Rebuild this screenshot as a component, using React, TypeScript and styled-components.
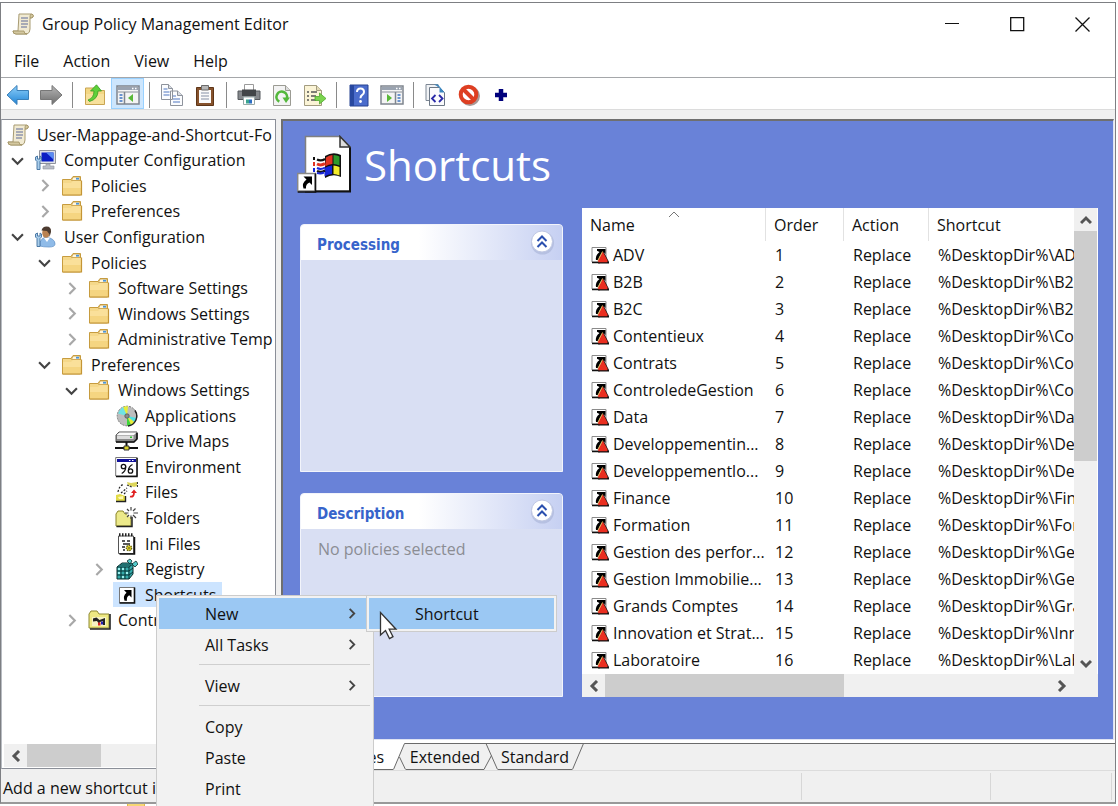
import React from "react";
import styled, { createGlobalStyle, css } from "styled-components";

const GlobalStyle = createGlobalStyle`
  * { box-sizing: border-box; }
  html, body { margin: 0; height: 100%; overflow: hidden; background: #fff; }
  #root { height: 100%; }
  body, button { font-family: "Open Sans", "Noto Sans", sans-serif; font-size: 16px; line-height: 20px; color: #111; }
  button { border: 0; padding: 0; margin: 0; background: none; text-align: left; white-space: nowrap; }
  svg { display: block; flex: none; }
`;

/* ---------- frame ---------- */

const Desktop = styled.div`
  position: relative;
  display: flex;
  flex-direction: column;
  height: 100%;
  padding: 2px 2px 0 0;
  overflow: hidden;
`;

const AppWindow = styled.div`
  display: flex;
  flex-direction: column;
  flex: 1;
  min-height: 0;
  background: #f0f0f0;
  border: 1px solid #7d7f83;
  border-bottom: 2px solid #999;
`;

const TitleBar = styled.header`
  display: flex;
  align-items: center;
  flex: none;
  height: 42px;
  padding-left: 11px;
  background: #fff;
`;

const Title = styled.h1`
  flex: 1;
  margin: 0 0 0 7px;
  font-size: 16px;
  font-weight: 400;
`;

const CaptionButton = styled.button`
  display: flex;
  align-items: center;
  justify-content: center;
  width: 65px;
  height: 42px;
`;

const MenuBar = styled.nav`
  display: flex;
  flex: none;
  height: 33px;
  padding-left: 2px;
  background: #fff;
  border-bottom: 1px solid #a5a7aa;
`;

const MenuBarItem = styled.button`
  padding: 0 13px 0 11px;
`;

const ToolBar = styled.div`
  display: flex;
  flex: none;
  height: 32px;
  background: #fff;
  border-bottom: 1px solid #dcdcdc;
`;

const ToolButton = styled.button<{ $on?: boolean }>`
  display: flex;
  align-items: center;
  justify-content: center;
  width: 33px;
  height: 31px;
  padding-top: 3px;
  ${(p) => p.$on && css`background: #cde6fd; border: 1px solid #99d1ff;`}
`;

const ToolDivider = styled.span`
  width: 1px;
  height: 26px;
  margin: 4px 5px 0;
  background: #8a8a8a;
`;

const Workspace = styled.main`
  display: flex;
  flex: 1;
  min-height: 0;
  padding: 9px 1px 0 0;
`;

/* ---------- tree ---------- */

const TreePane = styled.section`
  display: flex;
  flex-direction: column;
  flex: none;
  width: 275px;
  margin-bottom: 2px;
  padding-right: 2px;
  background: #fff;
  border: 1px solid #8b8f98;
  border-left-color: #b8bcc2;
  overflow: hidden;
`;

const TreeList = styled.ul`
  display: grid;
  grid-template-columns: 100%;
  grid-auto-rows: 1fr;
  height: 511px;
  margin: 2px 0 0;
  padding: 0;
  list-style: none;
  overflow: hidden;
`;

const TreeItem = styled.li<{ $level: number }>`
  display: flex;
  min-width: 0;
  padding-left: ${(p) => 3 + Math.max(0, p.$level - 1) * 27}px;
`;

const TreeToggle = styled.button`
  display: flex;
  align-items: center;
  justify-content: center;
  flex: none;
  width: 27px;
  padding-right: 2px;
`;

const TreeSpacer = styled.span`
  flex: none;
  width: 27px;
`;

const TreeLabel = styled.button<{ $selected?: boolean }>`
  display: flex;
  align-items: center;
  gap: 7px;
  padding: 0 6px 0 2px;
  background: ${(p) => (p.$selected ? "#cce4ff" : "transparent")};
`;

/* ---------- scroll bars ---------- */

const ScrollBar = styled.div<{ $vertical?: boolean }>`
  display: flex;
  flex: none;
  flex-direction: ${(p) => (p.$vertical ? "column" : "row")};
  ${(p) => (p.$vertical ? "width: 23px;" : "height: 23px;")}
  background: #f0f0f0;
`;

const TreeScroll = styled(ScrollBar)`
  margin: auto 0 1px 2px;
`;

const ListScroll = styled(ScrollBar)`
  padding-right: 26px;
`;

const ScrollArrow = styled.button`
  display: flex;
  align-items: center;
  justify-content: center;
  flex: none;
  width: 23px;
  height: 23px;
`;

const ScrollTrack = styled.div<{ $vertical?: boolean }>`
  display: flex;
  flex: 1;
  flex-direction: ${(p) => (p.$vertical ? "column" : "row")};
`;

const ScrollThumb = styled.div<{ $length: number }>`
  flex: 0 0 ${(p) => p.$length}px;
  background: #cdcdcd;
`;

/* ---------- details ---------- */

const DetailsPane = styled.section`
  display: flex;
  flex-direction: column;
  flex: 1;
  min-width: 0;
  margin-left: 5px;
`;

const Sheet = styled.div`
  display: flex;
  flex-direction: column;
  flex: 1;
  min-height: 0;
  padding: 0 15px 42px 17px;
  background: #6982d8;
  border: 2px solid #6f6f6f;
  border-right: 1px solid #dfe3f2;
  border-bottom: 1px solid #dfe3f2;
`;

const SheetHeader = styled.div`
  display: flex;
  align-items: center;
  flex: none;
  height: 87px;
  margin-left: -3px;
  padding-bottom: 2px;
`;

const SheetTitle = styled.h2`
  margin: 2px 0 0 13px;
  font-size: 42px;
  font-weight: 400;
  line-height: 54px;
  color: #fff;
`;

const SheetBody = styled.div`
  display: flex;
  flex: 1;
  gap: 19px;
  min-height: 0;
`;

const Cards = styled.div`
  display: flex;
  flex-direction: column;
  flex: none;
  gap: 21px;
  width: 263px;
  padding-top: 16px;
`;

const Card = styled.section<{ $grow: number }>`
  display: flex;
  flex-direction: column;
  flex: ${(p) => p.$grow} 0 0;
  background: #d9dff3;
  border: 1px solid #f2f4fb;
  border-radius: 4px 4px 0 0;
  overflow: hidden;
`;

const CardHeader = styled.div`
  display: flex;
  align-items: center;
  justify-content: space-between;
  height: 35px;
  padding: 0 7px 2px 16px;
  background: linear-gradient(90deg, #fff 45%, #c6d0f2);
`;

const CardTitle = styled.h3`
  margin: 6px 0 0;
  font: bold 15px/20px "DejaVu Sans Condensed", "DejaVu Sans", sans-serif;
  color: #3764cb;
`;

const CardNote = styled.p`
  margin: 0;
  padding: 10px 0 0 17px;
  color: #8b8d93;
`;

const ListPane = styled.div`
  display: flex;
  flex-direction: column;
  flex: 1;
  min-width: 0;
  background: #fff;
`;

const ListArea = styled.div`
  display: flex;
  flex: 1;
  min-height: 0;
  padding-right: 1px;
`;

const TableClip = styled.div`
  flex: 1;
  min-width: 0;
  overflow: hidden;
`;

const PolicyTable = styled.table`
  width: 100%;
  border-collapse: separate;
  border-spacing: 0;
  table-layout: fixed;
`;

const HeadCell = styled.th<{ $width?: number }>`
  position: relative;
  width: ${(p) => (p.$width ? p.$width + "px" : "auto")};
  height: 33px;
  padding: 0 0 0 8px;
  font-weight: 400;
  text-align: left;
  border-right: 1px solid #e2e2e2;
  &:last-child { border-right: 0; }
`;

const SortMark = styled.span`
  position: absolute;
  top: 0;
  left: 50%;
  margin-left: -6px;
`;

const Cell = styled.td`
  height: 27px;
  padding: 0 0 0 9px;
  white-space: nowrap;
  overflow: hidden;
`;

const NameCell = styled.div`
  display: flex;
  align-items: center;
  gap: 3px;
  height: 27px;
`;

/* ---------- tabs and status ---------- */

const TabStrip = styled.div`
  display: flex;
  flex: none;
  height: 31px;
  margin-right: -1px;
  padding-top: 3px;
  background: linear-gradient(#fff 3px, #f0f0f0 3px);
  border-bottom: 1px solid #dcdcdc;
`;

const Tab = styled.button<{ $active?: boolean; $width: number }>`
  width: ${(p) => p.$width}px;
  height: 27px;
  text-align: ${(p) => (p.$active ? "right" : "center")};
  padding-right: ${(p) => (p.$active ? 9 : 0)}px;
  background: ${(p) => (p.$active ? "#fff" : "#f0f0f0")};
  border-top: 1px solid ${(p) => (p.$active ? "#fff" : "#6a6a6a")};
  border-bottom: 1px solid #6a6a6a;
`;

const TabFiller = styled.div`
  flex: 1;
  border-top: 1px solid #6a6a6a;
`;

const StatusBar = styled.footer`
  display: flex;
  align-items: center;
  flex: none;
  height: 31px;
  padding: 2px 3px 2px 2px;
`;

const StatusCell = styled.div<{ $width?: number }>`
  flex: ${(p) => (p.$width ? `0 0 ${p.$width}px` : "1")};
  height: 27px;
  padding-top: 5px;
  border-right: 1px solid #d7d7d7;
`;

/* ---------- menus ---------- */

const Popup = styled.div`
  position: absolute;
  background: #f2f2f2;
  border: 1px solid #ccc;
  padding: 2px;
`;

const ContextMenu = styled(Popup)`
  top: 595px;
  left: 156px;
  width: 218px;
  height: 240px;
`;

const SubMenu = styled(Popup)`
  top: 595px;
  left: 366px;
  width: 191px;
`;

const MenuItem = styled.button<{ $hot?: boolean }>`
  display: flex;
  align-items: center;
  justify-content: space-between;
  width: 100%;
  height: 31px;
  padding: 0 14px 0 46px;
  background: ${(p) => (p.$hot ? "#9bc8f3" : "transparent")};
`;

const MenuRule = styled.hr`
  height: 1px;
  margin: 4px 1px 5px 40px;
  border: 0;
  background: #cfcfcf;
`;

const Pointer = styled.span`
  position: absolute;
  top: 611px;
  left: 379px;
`;

/* ---------- page behind the window ---------- */

const Behind = styled.div`
  display: flex;
  flex: none;
  height: 2px;
  padding-left: 127px;
  overflow: hidden;
`;

const BehindFolder = styled.span`
  width: 18px;
  height: 2px;
  background: #f7d774;
  border: 1px solid #e0b84c;
  border-top: 0;
  border-bottom: 0;
`;

/* ---------- icons ---------- */

const Chevron = ({ dir, color = "#555", size = 12, stroke = 2 }: { dir: "up" | "down" | "left" | "right"; color?: string; size?: number; stroke?: number }) => {
  const d = { up: "M1 9l5-5 5 5", down: "M1 4l5 5 5-5", left: "M9 1L4 6l5 5", right: "M4 1l5 5-5 5" }[dir];
  return (
    <svg width={size} height={size} viewBox="0 0 12 12" fill="none" stroke={color} strokeWidth={stroke}>
      <path d={d} />
    </svg>
  );
};

const ScrollIcon = () => (
  <svg width="23" height="22" viewBox="0 0 23 22">
    <path d="M7 1h12q3 0 2 3-1 1-3 1v11q0 4-3 5H4q-3 0-3-3h5z" fill="#f1ead2" stroke="#a89b73" />
    <path d="M18 5V3q0-2 2-2 2 1 1 3-1 1-3 1zM1 18h11q0 3 3 3H4q-3 0-3-3z" fill="#d3c79f" stroke="#a08f60" strokeWidth=".8" />
    <path d="M9 5h7M9 8h7M9 11h7M9 14h6" stroke="#8f95ad" strokeWidth="1.3" />
  </svg>
);

const FolderIcon = () => (
  <svg width="23" height="22" viewBox="0 0 23 22">
    <path d="M1.5 4.5h8.500l2-3h7.500V20H1.500z" fill="#f5d88a" stroke="#c79c3f" />
    <path d="M12 2h7v3.500h-8.500z" fill="#fff6dc" stroke="#c79c3f" strokeWidth=".8" />
    <path d="M15 3.700h3" stroke="#4a94d8" strokeWidth="1.8" />
    <path d="M2 8h8l2-2h8v13.500H2z" fill="#fae09a" />
    <path d="M2 13h18v6.500H2z" fill="#f5d581" />
    <path d="M1.500 20h19V5.500" fill="none" stroke="#c49536" strokeWidth="1.2" />
  </svg>
);

const Wrench = () => (
  <path d="M1.500 8v3l1.500 1.500v8h3v-8L7.500 11V8L6 7v3H3.500V7z" fill="#a9cdea" stroke="#3f6f9f" strokeWidth=".9" />
);

const ComputerIcon = () => (
  <svg width="23" height="22" viewBox="0 0 23 22">
    <path d="M5.500 1.500h16v13h-16z" fill="#dfe2e8" stroke="#8e929c" />
    <path d="M7.500 3.500h12v9h-12z" fill="#0b1fc4" />
    <path d="M12 3.500h7.500v7z" fill="#5a8cf2" />
    <path d="M12 15h4v2h4v3H9v-3h3z" fill="#b9bdc6" stroke="#8c909a" strokeWidth=".6" />
    <Wrench />
  </svg>
);

const UserIcon = () => (
  <svg width="23" height="22" viewBox="0 0 23 22">
    <path d="M6 20q-1-7 6-9 9 1.500 9 7 0 3-6 3-6 0-9-1z" fill="#8fbbe8" stroke="#6a98cc" strokeWidth=".8" />
    <path d="M10 12l3 4 3-4.500z" fill="#fff" />
    <ellipse cx="12" cy="7" rx="3.800" ry="4.800" fill="#b98252" />
    <path d="M7.500 4.500q1-4 5-4 5 0 4.500 5.500L15.500 11q0-4-2.500-6z" fill="#4c3b30" />
    <Wrench />
  </svg>
);

const DiscIcon = () => (
  <svg width="23" height="22" viewBox="0 0 23 22">
    <circle cx="12" cy="11" r="9.800" fill="#bdbdbd" stroke="#777" strokeDasharray="2 1" />
    <path d="M12 11L8 2q2-1 5-.8z" fill="#e6ee39" />
    <path d="M12 11L3 8.500Q5 4 8 2z" fill="#6fe3e3" />
    <path d="M12 11l7.500 6q-1 2-3.500 3z" fill="#e6ee39" />
    <path d="M12 11l4 9q-2 1-4 .8z" fill="#3fd53a" />
    <path d="M12 11l9.500 2q-.5 2-2 4z" fill="#4fe0e0" />
    <circle cx="12" cy="11" r="2.200" fill="#8a8a8a" stroke="#555" strokeWidth=".8" />
    <path d="M20 5.500a10 10 0 01-7 15.500" fill="none" stroke="#222" strokeWidth="1.4" />
  </svg>
);

const DriveIcon = () => (
  <svg width="23" height="22" viewBox="0 0 23 22">
    <path d="M1 5l3-3h18v7l-3 3H1z" fill="#8a8a8a" stroke="#555" />
    <path d="M1.500 5l3-2.500h17L19 5z" fill="#fafafa" />
    <path d="M2 5.500h16.500V9H2z" fill="#dcdcdc" />
    <path d="M1 12h18l3-3V3" fill="none" stroke="#111" strokeWidth="1.6" />
    <path d="M15 7.200h2" stroke="#2cc12c" strokeWidth="1.500" />
    <path d="M11.500 12v5M0 18h23" stroke="#111" strokeWidth="2" />
    <path d="M9 16h5v4H9z" fill="#d8d02a" stroke="#333" />
  </svg>
);

const EnvironmentIcon = () => (
  <svg width="23" height="22" viewBox="0 0 23 22">
    <path d="M.7 1.500h21.500v18.500H.7z" fill="#fff" stroke="#777" />
    <path d="M22 2v18.500H1" fill="none" stroke="#111" strokeWidth="1.500" />
    <path d="M2 3h19v3H2z" fill="#10109a" />
    <path d="M14 4.500h1.500M17 4.500h1.500" stroke="#fff" />
    <circle cx="8.500" cy="10.500" r="2.200" fill="none" stroke="#111" strokeWidth="1.300" />
    <path d="M10.700 10.500q0 5-4 7M17.500 8.500q-4 2-4 6" fill="none" stroke="#111" strokeWidth="1.300" />
    <circle cx="15.500" cy="15" r="2.200" fill="none" stroke="#111" strokeWidth="1.300" />
  </svg>
);

const FilesIcon = () => (
  <svg width="23" height="22" viewBox="0 0 23 22">
    <path d="M12 1l4 1 6-1v4l-3 1-6-2z" fill="#ddd65a" />
    <path d="M12 4l5 2M22.500 1v5.500" stroke="#333" strokeWidth="1.2" strokeDasharray="2 1" />
    <path d="M3 11q1-6 6-8M6 12l6-5M9 13l3-3" fill="none" stroke="#222" strokeWidth="1.200" strokeDasharray="2 1.500" />
    <path d="M1 14l4-1 5 2v5H1z" fill="#e3dc48" />
    <path d="M3 16l5-1v3H4z" fill="#fff8b0" />
    <path d="M1 20.500h9.500V15" fill="none" stroke="#222" strokeWidth="1.4" />
    <path d="M15 15.500q4 1 4-4" fill="none" stroke="#e02020" strokeWidth="1.800" />
    <path d="M16 12h6l-3-3.500z" fill="#e02020" />
  </svg>
);

const NewFolderIcon = () => (
  <svg width="23" height="22" viewBox="0 0 23 22">
    <path d="M1 7l2-3h5l2 3h6v12H1z" fill="#ece98a" stroke="#8a8528" />
    <path d="M17 8v11.500H1.500" fill="none" stroke="#222" strokeWidth="1.500" />
    <circle cx="16" cy="6" r="4" fill="#fff" />
    <path d="M16 0v3.500M16 8.500v3.500M10 6h3.500M18.500 6H23M12 2l2 2M20.500 1.500L18 4M12 10l2-2M18 8l3 3" stroke="#444" strokeWidth="1.200" />
  </svg>
);

const IniIcon = () => (
  <svg width="23" height="22" viewBox="0 0 23 22">
    <path d="M3.500 3h15v17.500h-15z" fill="#fff" stroke="#555" />
    <path d="M19.500 4v17H4.500" fill="none" stroke="#111" strokeWidth="1.500" />
    <path d="M4 1.800h15" stroke="#222" strokeWidth="3" strokeDasharray="1.500 1.500" />
    <path d="M7 8h3M12 8h3M8 11h7M7 14h3M8 17h2" stroke="#222" strokeWidth="1.500" />
    <circle cx="14" cy="15" r="2.600" fill="#e4d626" stroke="#6b6410" strokeDasharray="1.500 .8" strokeWidth="1.400" />
    <circle cx="14" cy="15" r=".8" fill="#333" />
  </svg>
);

const RegistryIcon = () => (
  <svg width="23" height="22" viewBox="0 0 23 22">
    <path d="M2 9l5-4h9l2 1v10l-4 5H2z" fill="#35abab" stroke="#0a2c2c" />
    <path d="M2 9h12v12M14 9l4-3M6 9v12M10 9v12M2 13h12l4-3M2 17h12l4-3M5 7h11" fill="none" stroke="#06292b" strokeWidth=".9" />
    <path d="M3 10h2v2H3zM7 10h2v2H7zM11 14h2v2h-2zM3 14h2v2H3zM7 18h2v2H7z" fill="#9df0ee" />
    <path d="M12 3l3-2 2 2-2 3zM17 6l4-3 2 3-3 3z" fill="#52c9c9" stroke="#0a2c2c" strokeWidth=".8" />
  </svg>
);

const ShortcutIcon = () => (
  <svg width="23" height="22" viewBox="0 0 23 22">
    <path d="M4.500 3.500h15v15h-15z" fill="#fff" stroke="#777" />
    <path d="M19.500 3.500V19H4.500" fill="none" stroke="#111" strokeWidth="1.600" />
    <path d="M9 6h7.500v7.500L14.200 11.200q-3 1.500-2.200 5.500H9.500Q7.500 12 11.500 8.700z" fill="#000" />
  </svg>
);

const ControlPanelIcon = () => (
  <svg width="23" height="22" viewBox="0 0 23 22">
    <path d="M1 5l2-3h6l2 3h10v14H1z" fill="#eee983" stroke="#8f8a33" />
    <path d="M22 5v15H2" fill="none" stroke="#222" strokeWidth="1.600" />
    <path d="M4 8h14v9H4z" fill="#f6f3c4" />
    <path d="M5 9.500l3.500-1 3 2.500 5.500-2v7h-2v-4l-3 1-1 2-2-3-4 .5z" fill="#222" />
    <path d="M10 13.500h2.500v3H10z" fill="#d22" />
    <path d="M13 12.500h2v3h-2z" fill="#22b" />
  </svg>
);

const PolicyIcon = () => (
  <svg width="19" height="18" viewBox="0 0 19 18">
    <path d="M1 1.500h14V16H1z" fill="#fff" stroke="#8a8a8a" />
    <path d="M1 16.500h8" stroke="#111" strokeWidth="1.500" />
    <path d="M6 3h8.500v5l-2-2q-4 3-5 8H5Q4 9.500 8.500 6L6 4.800z" fill="#000" />
    <path d="M12.300 5l5.700 11v1.500H7z" fill="#111" />
    <path d="M11.800 5.500l5 9.500-.8 1.200H7.500L6.800 15z" fill="#ea2f20" />
    <path d="M11.500 5.500L6.800 14.500" stroke="#d8c060" strokeWidth="1" />
  </svg>
);

const BigShortcutIcon = () => (
  <svg width="54" height="58" viewBox="0 0 54 58">
    <path d="M8.500 1.500H43L53 12v44H8.500z" fill="#fff" stroke="#808080" strokeWidth="1.500" />
    <path d="M53 12v44.500H8" fill="none" stroke="#111" strokeWidth="2" />
    <path d="M43 1.500V12h10z" fill="#ddd" stroke="#333" strokeWidth="1.500" />
    <path d="M28 21q8-5 16-1v22q-8-4-16 1z" fill="#111" />
    <path d="M29 22.500q3-2.500 6.500-2.500v9q-4 0-7.500 2.500z" fill="#e23322" />
    <path d="M36.500 20q4 0 6 1.500v9q-3-1.500-6-1.500z" fill="#2f9a2c" />
    <path d="M27.500 33q4-2.500 7.500-2.500V39q-4 0-7.500 2.500z" fill="#1726d8" />
    <path d="M36.500 30.500q3 0 6 1.500v8.500q-3-1.500-6-1.500z" fill="#f4ec2a" />
    <path d="M20 24.500q4 2 8-.5M20 36q4 2 8-.5" fill="none" stroke="#111" strokeWidth="2.200" />
    <path d="M20 29q4 2 8-.5" fill="none" stroke="#e23322" strokeWidth="3" />
    <path d="M20 33q4 2 8-.5M20 38q4 1 7-.5" fill="none" stroke="#1726d8" strokeWidth="2" />
    <path d="M17 22v3" stroke="#111" strokeWidth="2" />
    <path d="M17 27v4" stroke="#e23322" strokeWidth="2" />
    <path d="M17 33v4" stroke="#1726d8" strokeWidth="2" />
    <path d="M.7 38.500h17.500V56H.7z" fill="#fff" stroke="#888" strokeWidth="1.500" />
    <path d="M18.500 38.500V57H.7" fill="none" stroke="#111" strokeWidth="1.600" />
    <path d="M6.500 41.500H15V50l-2.500-2.500q-4 1.500-3.500 6H6.500q-2-5.500 3-9z" fill="#000" />
  </svg>
);

const CollapseIcon = () => (
  <svg width="26" height="26" viewBox="0 0 26 26">
    <circle cx="13.500" cy="14" r="11.500" fill="#a7b2d6" opacity=".6" />
    <circle cx="13" cy="12.500" r="10.500" fill="#fff" stroke="#bfc7e3" />
    <path d="M8.500 12l4.500-4.500 4.500 4.500M8.500 18l4.500-4.500 4.500 4.500" fill="none" stroke="#2a4fae" strokeWidth="2" />
  </svg>
);

const BackIcon = () => (
  <svg width="24" height="22" viewBox="0 0 24 22">
    <defs><linearGradient id="bk" x1="0" y1="0" x2="0" y2="1"><stop offset="0" stopColor="#8fd0fa" /><stop offset="1" stopColor="#1f84d6" /></linearGradient></defs>
    <path d="M1 11L11 1.500v5h11.500v9H11v5z" fill="url(#bk)" stroke="#3a7fb8" />
  </svg>
);

const ForwardIcon = () => (
  <svg width="24" height="22" viewBox="0 0 24 22">
    <defs><linearGradient id="fw" x1="0" y1="0" x2="0" y2="1"><stop offset="0" stopColor="#b5b5b5" /><stop offset="1" stopColor="#6e6e6e" /></linearGradient></defs>
    <path d="M23 11L13 1.500v5H1.500v9H13v5z" fill="url(#fw)" stroke="#777" />
  </svg>
);

const UpFolderIcon = () => (
  <svg width="22" height="22" viewBox="0 0 22 22">
    <path d="M1.500 4h9l2 2.500h8v14h-19z" fill="#f3d784" stroke="#c9a552" />
    <path d="M2 10h18v10H2z" fill="#f7e09c" />
    <path d="M4 16q6-2 6-9H6.500L12.500.8 17.500 7H14q0 8-8.500 10.500z" fill="#5fd03a" stroke="#3a9a22" strokeWidth=".8" />
  </svg>
);

const TreePanelIcon = ({ flip }: { flip?: boolean }) => (
  <svg width="24" height="20" viewBox="0 0 24 20">
    <path d="M1 1h22v18H1z" fill="#f4f4f4" stroke="#7f858e" strokeWidth="1.500" />
    <path d="M2 2h20v3H2z" fill="#9aa3b0" />
    <path d="M16 3.500h1.500M19 3.500h1.500" stroke="#fff" strokeWidth="1.300" />
    <path d="M2 7h20" stroke="#8a909a" />
    <g transform={flip ? "matrix(-1 0 0 1 24 0)" : undefined}>
      <path d="M8.500 7v12" stroke="#7f858e" strokeWidth="1.500" />
      <path d="M3.500 10h3M3.500 13h3M3.500 16h3" stroke="#3c73c2" strokeWidth="1.500" />
      <path d="M17 9v8l-5-4z" fill="#59b837" />
    </g>
  </svg>
);

const CopyIcon = () => (
  <svg width="24" height="24" viewBox="0 0 24 24">
    <path d="M1.500 1.500h7l4 4v11h-11zM10.500 8h7l5 4.500v10h-12z" fill="#fbfcfe" stroke="#8e939c" />
    <path d="M8.500 1.500v4h4M17.500 8v4.500h5" fill="#d9dde4" stroke="#8e939c" />
    <path d="M3.500 6h4M3.500 9h6M3.500 12h6M13 13h3M13 16h7M13 19h7" stroke="#5077c0" strokeWidth="1.200" />
  </svg>
);

const ClipboardIcon = () => (
  <svg width="20" height="23" viewBox="0 0 20 23">
    <path d="M1.500 3.500h17v18h-17z" fill="#86522c" stroke="#5e3517" />
    <path d="M4 6h12v13H4z" fill="#fafafa" />
    <path d="M6.500 1.500h7v4.500h-7z" fill="#b6b6b6" stroke="#6a6a6a" />
    <path d="M6 9h8M6 12h8M6 15h8" stroke="#8590a5" />
  </svg>
);

const PrinterIcon = () => (
  <svg width="24" height="24" viewBox="0 0 24 24">
    <path d="M7.500 1.500h9V8h-9z" fill="#fff" stroke="#9a9a9a" />
    <path d="M1 8h22v8.500H1z" fill="#85888c" stroke="#55585c" />
    <path d="M5 6.500h14V13H5z" fill="#424548" />
    <path d="M6.500 14h11v7.500h-11z" fill="#fff" stroke="#9aa" />
    <path d="M9 16.500h3v4H9z" fill="#3aa58f" /><path d="M12 16.500h3v4h-3z" fill="#2d6fc2" />
  </svg>
);

const RefreshIcon = () => (
  <svg width="22" height="23" viewBox="0 0 22 23">
    <path d="M2.500 1.500h12l5 5v15h-17z" fill="#f3f3f3" stroke="#9b9b93" />
    <path d="M14.500 1.500v5h5" fill="#ddd" stroke="#9b9b93" />
    <path d="M8.300 17.600a5.300 5.300 0 117.500-3" fill="none" stroke="#54b83c" strokeWidth="2.600" />
    <path d="M11.500 13.500h7.500l-4 5.500z" fill="#54b83c" />
  </svg>
);

const ExportIcon = () => (
  <svg width="24" height="23" viewBox="0 0 24 23">
    <path d="M1.500 1.500h12l5 5v15h-17z" fill="#fbf4d6" stroke="#a39c80" />
    <path d="M13.500 1.500v5h5" fill="#e4dcb8" stroke="#a39c80" />
    <path d="M4 8h2M4 12h2M4 16h2M8 8h6M8 12h5M8 16h5" stroke="#555" strokeWidth="1.500" />
    <path d="M12 12.500h4.500V9l6.500 5.500-6.500 5.500v-3.500H12z" fill="#7bd44e" stroke="#4fa82c" strokeWidth=".8" />
  </svg>
);

const HelpIcon = () => (
  <svg width="20" height="23" viewBox="0 0 20 23">
    <path d="M1 1h18v21H1z" fill="#4a6ccc" stroke="#274391" />
    <path d="M1 1h4v21H1z" fill="#27479f" />
    <path d="M8 8q0-3.500 3.500-3.500T15 8q0 2-2 3.200-1.500 1-1.500 3" fill="none" stroke="#fff" strokeWidth="2" />
    <circle cx="11.500" cy="17.500" r="1.400" fill="#fff" />
  </svg>
);

const CodePagesIcon = () => (
  <svg width="21" height="24" viewBox="0 0 21 24">
    <path d="M1 1.500h12v16H1z" fill="#f0f2f5" stroke="#7d8794" />
    <path d="M4.500 4.500h10l5 5v13h-15z" fill="#fbfbfd" stroke="#6d7886" />
    <path d="M9 1.500h4l6.500 8h-5v-5z" fill="#3c87c0" />
    <path d="M10.500 12L7 15.500l3.500 3.500M14 12l3.500 3.500L14 19" fill="none" stroke="#2a2aa8" strokeWidth="1.800" />
  </svg>
);

const StopIcon = () => (
  <svg width="22" height="22" viewBox="0 0 22 22">
    <circle cx="12" cy="12" r="8" fill="none" stroke="#a89a98" strokeWidth="4" />
    <circle cx="10.500" cy="10.500" r="7.800" fill="#fff" stroke="#de3f22" strokeWidth="4" />
    <path d="M5 5l11 11" stroke="#de3f22" strokeWidth="4" />
  </svg>
);

const PlusIcon = () => (
  <svg width="15" height="15" viewBox="0 0 15 15">
    <path d="M7 1v12M1 7h12" stroke="#00007b" strokeWidth="4.500" />
  </svg>
);

/* ---------- data ---------- */

type Node = { level: number; text: string; icon: React.ComponentType; open?: boolean; selected?: boolean };

const nodes: Node[] = [
  { level: 0, text: "User-Mappage-and-Shortcut-Fo", icon: ScrollIcon },
  { level: 1, text: "Computer Configuration", icon: ComputerIcon, open: true },
  { level: 2, text: "Policies", icon: FolderIcon, open: false },
  { level: 2, text: "Preferences", icon: FolderIcon, open: false },
  { level: 1, text: "User Configuration", icon: UserIcon, open: true },
  { level: 2, text: "Policies", icon: FolderIcon, open: true },
  { level: 3, text: "Software Settings", icon: FolderIcon, open: false },
  { level: 3, text: "Windows Settings", icon: FolderIcon, open: false },
  { level: 3, text: "Administrative Temp", icon: FolderIcon, open: false },
  { level: 2, text: "Preferences", icon: FolderIcon, open: true },
  { level: 3, text: "Windows Settings", icon: FolderIcon, open: true },
  { level: 4, text: "Applications", icon: DiscIcon },
  { level: 4, text: "Drive Maps", icon: DriveIcon },
  { level: 4, text: "Environment", icon: EnvironmentIcon },
  { level: 4, text: "Files", icon: FilesIcon },
  { level: 4, text: "Folders", icon: NewFolderIcon },
  { level: 4, text: "Ini Files", icon: IniIcon },
  { level: 4, text: "Registry", icon: RegistryIcon, open: false },
  { level: 4, text: "Shortcuts", icon: ShortcutIcon, selected: true },
  { level: 3, text: "Control Panel Settings", icon: ControlPanelIcon, open: false },
];

const policies: { name: string; file: string }[] = [
  { name: "ADV", file: "ADV" },
  { name: "B2B", file: "B2B" },
  { name: "B2C", file: "B2C" },
  { name: "Contentieux", file: "Cont" },
  { name: "Contrats", file: "Cont" },
  { name: "ControledeGestion", file: "Cont" },
  { name: "Data", file: "Data" },
  { name: "Developpementin...", file: "Dev" },
  { name: "Developpementlo...", file: "Dev" },
  { name: "Finance", file: "Fina" },
  { name: "Formation", file: "Form" },
  { name: "Gestion des perfor...", file: "Gest" },
  { name: "Gestion Immobilie...", file: "Gest" },
  { name: "Grands Comptes", file: "Gran" },
  { name: "Innovation et Strat...", file: "Inno" },
  { name: "Laboratoire", file: "Labo" },
];

const tools: ({ name: string; icon: React.ReactNode; on?: boolean } | null)[] = [
  { name: "Back", icon: <BackIcon /> },
  { name: "Forward", icon: <ForwardIcon /> },
  null,
  { name: "Up one level", icon: <UpFolderIcon /> },
  { name: "Show console tree", icon: <TreePanelIcon />, on: true },
  null,
  { name: "Copy", icon: <CopyIcon /> },
  { name: "Paste", icon: <ClipboardIcon /> },
  null,
  { name: "Print", icon: <PrinterIcon /> },
  { name: "Refresh", icon: <RefreshIcon /> },
  { name: "Export list", icon: <ExportIcon /> },
  null,
  { name: "Help", icon: <HelpIcon /> },
  { name: "Show action pane", icon: <TreePanelIcon flip /> },
  null,
  { name: "Display XML", icon: <CodePagesIcon /> },
  { name: "Disable", icon: <StopIcon /> },
  { name: "Add", icon: <PlusIcon /> },
];

const menuItems: ({ text: string; sub?: boolean; hot?: boolean } | null)[] = [
  { text: "New", sub: true, hot: true },
  { text: "All Tasks", sub: true },
  null,
  { text: "View", sub: true },
  null,
  { text: "Copy" },
  { text: "Paste" },
  { text: "Print" },
];

/* ---------- page ---------- */

export default function App() {
  return (
    <Desktop>
      <GlobalStyle />
      <AppWindow>
        <TitleBar>
          <ScrollIcon />
          <Title>Group Policy Management Editor</Title>
          <CaptionButton aria-label="Minimize">
            <svg width="15" height="15"><path d="M0 6.500h14" stroke="#111" /></svg>
          </CaptionButton>
          <CaptionButton aria-label="Maximize">
            <svg width="15" height="15"><path d="M.7.700h13v13h-13z" fill="none" stroke="#111" strokeWidth="1.300" /></svg>
          </CaptionButton>
          <CaptionButton aria-label="Close">
            <svg width="15" height="15"><path d="M.5.500l14 14m0-14l-14 14" stroke="#111" strokeWidth="1.300" /></svg>
          </CaptionButton>
        </TitleBar>

        <MenuBar>
          {["File", "Action", "View", "Help"].map((m) => (
            <MenuBarItem key={m}>{m}</MenuBarItem>
          ))}
        </MenuBar>

        <ToolBar role="toolbar">
          {tools.map((t, i) =>
            t ? (
              <ToolButton key={i} aria-label={t.name} $on={t.on}>{t.icon}</ToolButton>
            ) : (
              <ToolDivider key={i} />
            )
          )}
        </ToolBar>

        <Workspace>
          <TreePane>
            <TreeList>
              {nodes.map((n, i) => (
                <TreeItem key={i} $level={n.level}>
                  {n.level > 0 &&
                    (n.open === undefined ? (
                      <TreeSpacer />
                    ) : (
                      <TreeToggle aria-label={n.open ? "Collapse" : "Expand"}>
                        <Chevron dir={n.open ? "down" : "right"} color={n.open ? "#444" : "#a8a8a8"} size={13} />
                      </TreeToggle>
                    ))}
                  <TreeLabel $selected={n.selected}>
                    <n.icon />
                    {n.text}
                  </TreeLabel>
                </TreeItem>
              ))}
            </TreeList>
            <TreeScroll>
              <ScrollArrow aria-label="Scroll left"><Chevron dir="left" stroke={3} /></ScrollArrow>
              <ScrollTrack><ScrollThumb $length={74} /></ScrollTrack>
              <ScrollArrow aria-label="Scroll right"><Chevron dir="right" stroke={3} /></ScrollArrow>
            </TreeScroll>
          </TreePane>

          <DetailsPane>
            <Sheet>
              <SheetHeader>
                <BigShortcutIcon />
                <SheetTitle>Shortcuts</SheetTitle>
              </SheetHeader>
              <SheetBody>
                <Cards>
                  <Card $grow={249}>
                    <CardHeader>
                      <CardTitle>Processing</CardTitle>
                      <button aria-label="Collapse Processing"><CollapseIcon /></button>
                    </CardHeader>
                  </Card>
                  <Card $grow={204}>
                    <CardHeader>
                      <CardTitle>Description</CardTitle>
                      <button aria-label="Collapse Description"><CollapseIcon /></button>
                    </CardHeader>
                    <CardNote>No policies selected</CardNote>
                  </Card>
                </Cards>

                <ListPane>
                  <ListArea>
                    <TableClip>
                      <PolicyTable>
                        <thead>
                          <tr>
                            <HeadCell $width={184}>
                              Name
                              <SortMark><Chevron dir="up" color="#777" stroke={1} /></SortMark>
                            </HeadCell>
                            <HeadCell $width={78}>Order</HeadCell>
                            <HeadCell $width={85}>Action</HeadCell>
                            <HeadCell>Shortcut</HeadCell>
                          </tr>
                        </thead>
                        <tbody>
                          {policies.map((p, i) => (
                            <tr key={p.name}>
                              <Cell>
                                <NameCell>
                                  <PolicyIcon />
                                  {p.name}
                                </NameCell>
                              </Cell>
                              <Cell>{i + 1}</Cell>
                              <Cell>Replace</Cell>
                              <Cell>{"%DesktopDir%\\" + p.file}</Cell>
                            </tr>
                          ))}
                        </tbody>
                      </PolicyTable>
                    </TableClip>
                    <ScrollBar $vertical>
                      <ScrollArrow aria-label="Scroll up"><Chevron dir="up" stroke={3} /></ScrollArrow>
                      <ScrollTrack $vertical><ScrollThumb $length={230} /></ScrollTrack>
                      <ScrollArrow aria-label="Scroll down"><Chevron dir="down" stroke={3} /></ScrollArrow>
                    </ScrollBar>
                  </ListArea>
                  <ListScroll>
                    <ScrollArrow aria-label="Scroll left"><Chevron dir="left" stroke={3} /></ScrollArrow>
                    <ScrollTrack><ScrollThumb $length={239} /></ScrollTrack>
                    <ScrollArrow aria-label="Scroll right"><Chevron dir="right" stroke={3} /></ScrollArrow>
                  </ListScroll>
                </ListPane>
              </SheetBody>
            </Sheet>

            <TabStrip>
              <Tab $active $width={112}>Preferences</Tab>
              <svg width="13" height="27">
                <path d="M0 0h12L0 27z" fill="#fff" />
                <path d="M.500 26.500L11.500.500H13M6.500 14l6 12.500" fill="none" stroke="#6a6a6a" />
              </svg>
              <Tab $width={78}>Extended</Tab>
              <svg width="14" height="27">
                <path d="M0 .500h14M0 26.500l7.500-14M2 .500l11.500 26" fill="none" stroke="#6a6a6a" />
              </svg>
              <Tab $width={74}>Standard</Tab>
              <svg width="12" height="27">
                <path d="M0 .500h12M.500 26.500l11-26" fill="none" stroke="#6a6a6a" />
              </svg>
              <TabFiller />
            </TabStrip>
          </DetailsPane>
        </Workspace>

        <StatusBar>
          <StatusCell>Add a new shortcut item</StatusCell>
          <StatusCell $width={189} />
          <StatusCell $width={121} />
        </StatusBar>
      </AppWindow>

      <Behind><BehindFolder /></Behind>

      <ContextMenu>
        {menuItems.map((m, i) =>
          m ? (
            <MenuItem key={i} $hot={m.hot}>
              {m.text}
              {m.sub && <Chevron dir="right" color="#444" size={11} />}
            </MenuItem>
          ) : (
            <MenuRule key={i} />
          )
        )}
      </ContextMenu>
      <SubMenu>
        <MenuItem $hot>Shortcut</MenuItem>
      </SubMenu>
      <Pointer>
        <svg width="19" height="29" viewBox="0 0 19 29">
          <path d="M1.500 1.500v22.500l5-4.500 4 8 3.500-1.800-3.800-7.500H17z" fill="#fff" stroke="#333" strokeWidth="1.300" />
        </svg>
      </Pointer>
    </Desktop>
  );
}
